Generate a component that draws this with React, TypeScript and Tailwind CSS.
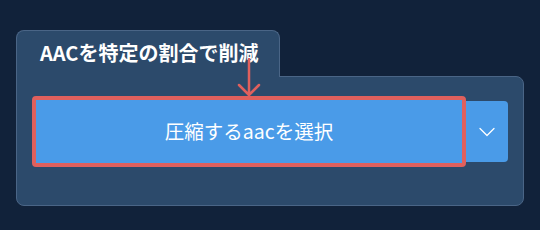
export default function App() {
  return (
    <div
      className="w-[540px] h-[230px] bg-[#11223a] pt-[30px] px-4"
      style={{ fontFamily: '"Noto Sans CJK JP", "Noto Sans", sans-serif' }}
    >
      {/* tab */}
      <div className="relative z-10 -mb-px w-[264px] h-[47px] rounded-t-lg border border-b-0 border-[#4a6586] bg-[#2c4a6b] pl-[23px] pt-[7px]">
        <span className="text-[20px] font-bold leading-[30px] text-white">AACを特定の割合で削減</span>
      </div>

      {/* panel */}
      <div className="relative h-[130px] rounded-b-lg rounded-tr-lg border border-[#4a6586] bg-[#2c4a6b] pl-[15px] pr-[15px] pt-[19px]">
        <div className="flex items-center">
          <button className="flex h-[71px] w-[434px] items-center justify-center rounded-[4px] border-4 border-[#e0605d] bg-[#4a9be8] pb-px text-[19.5px] text-white">
            圧縮するaacを選択
          </button>
          <div className="flex h-[61px] w-[42px] items-center justify-center rounded-r-[4px] bg-[#4a9be8]">
            <svg width="16" height="10" viewBox="0 0 16 10" fill="none">
              <path d="M1 1.5 L8 8.5 L15 1.5" stroke="white" strokeWidth="1.3" strokeLinecap="round" strokeLinejoin="round" />
            </svg>
          </div>
        </div>

        {/* arrow overlay */}
        <svg
          className="absolute left-[219px] top-[-19px] z-20"
          width="26"
          height="40"
          viewBox="0 0 26 40"
          fill="none"
        >
          <path d="M13 1 V37 M3 27 L13 37 L23 27" stroke="#e0605d" strokeWidth="2.5" strokeLinecap="round" strokeLinejoin="round" />
        </svg>
      </div>
    </div>
  );
}
